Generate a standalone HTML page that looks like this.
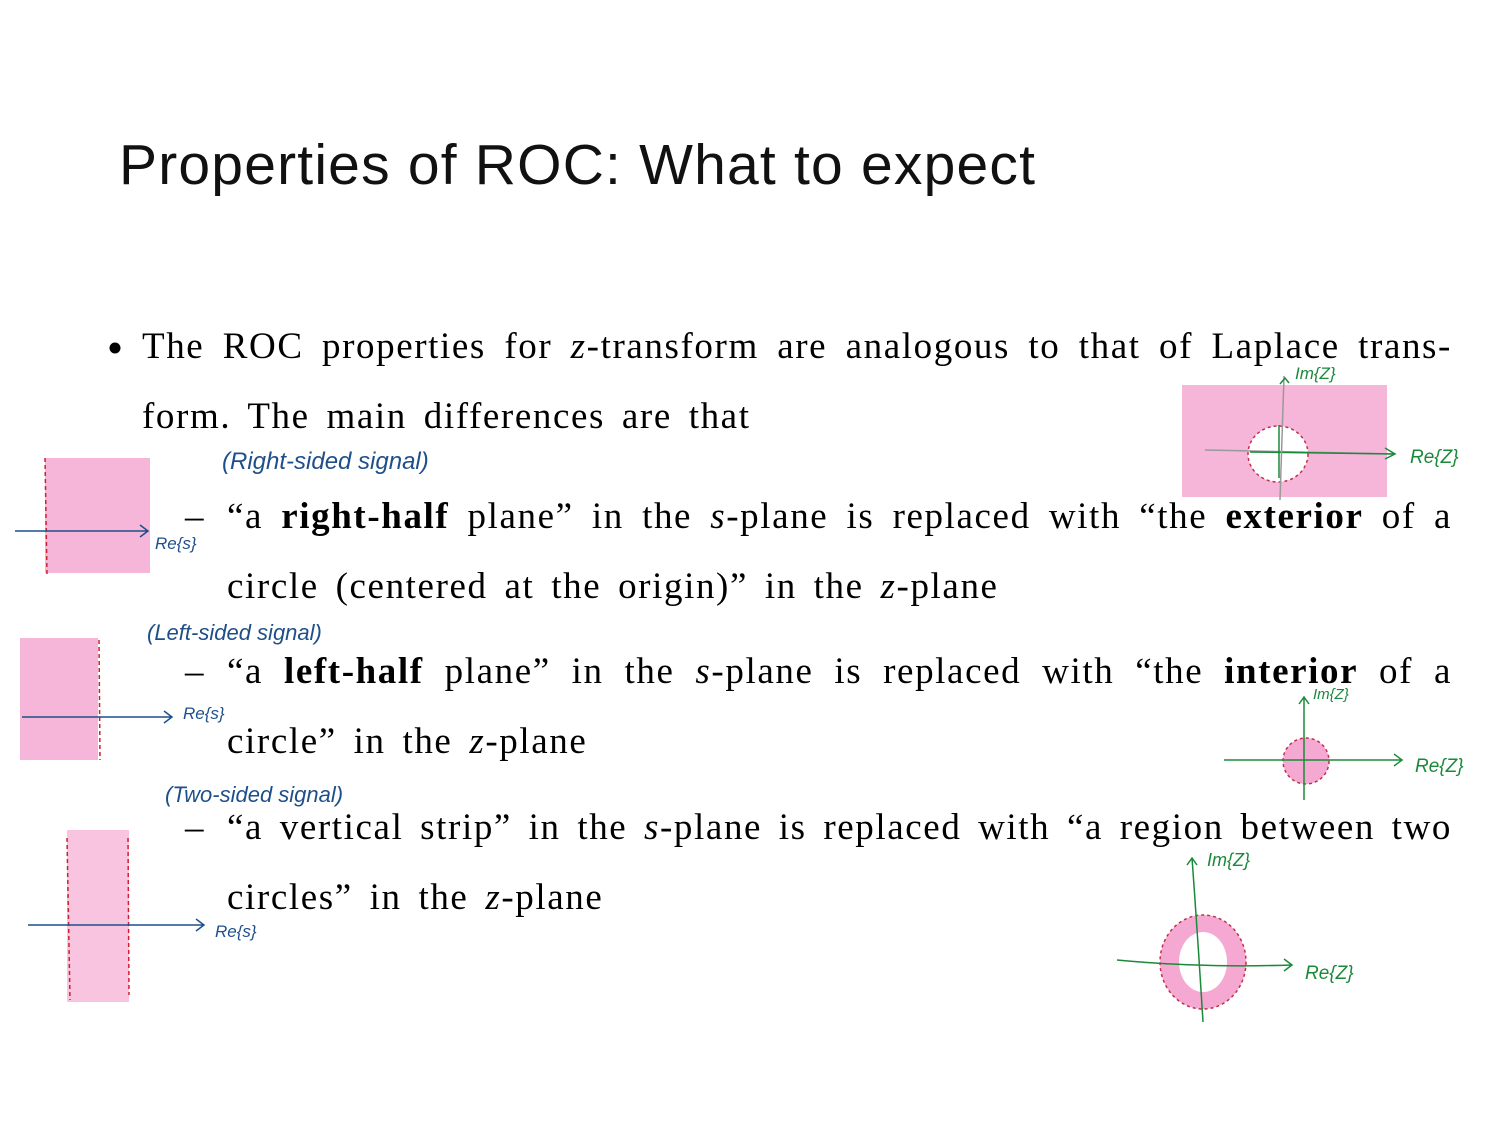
<!DOCTYPE html>
<html><head><meta charset="utf-8"><style>
body{margin:0;background:#fff;width:1500px;height:1125px;position:relative;overflow:hidden;font-family:"Liberation Serif",serif;color:#000}
.t{position:absolute;left:119px;top:132px;font-family:"Liberation Sans",sans-serif;font-size:57px;font-weight:300;letter-spacing:1.2px;color:#111}
.l{position:absolute;font-size:37px;line-height:40px;white-space:nowrap;letter-spacing:1.6px;word-spacing:6px}
.j{text-align:justify;text-align-last:justify;white-space:normal;letter-spacing:1.6px;word-spacing:0}
i{font-style:italic}
.h{position:absolute;font-family:"Liberation Sans",sans-serif;font-style:italic}
</style></head><body>
<div class="t">Properties of ROC: What to expect</div>
<svg style="position:absolute;left:0;top:0" width="1500" height="1125">
<rect x="1182" y="385" width="205" height="112" fill="#f5a9d2" opacity=".85"/>
<ellipse cx="1278" cy="454" rx="30" ry="28" fill="#fff" stroke="#c0304a" stroke-dasharray="3,3" stroke-width="1.5"/>
<line x1="1205" y1="450" x2="1395" y2="454" stroke="#999" stroke-width="1.5"/>
<line x1="1250" y1="452" x2="1395" y2="454" stroke="#1a8a3a" stroke-width="1.5"/>
<line x1="1280" y1="500" x2="1284" y2="376" stroke="#999" stroke-width="1.5"/>
<line x1="1279" y1="425" x2="1279" y2="478" stroke="#1a8a3a" stroke-width="1.5"/>
<path d="M1385 448l10 6-10 5M1280 384l5-6 4 5" fill="none" stroke="#1a8a3a" stroke-width="1.5"/>
<rect x="45" y="458" width="105" height="115" fill="#f5a9d2" opacity=".85"/>
<line x1="45" y1="458" x2="47" y2="575" stroke="#d02030" stroke-dasharray="4,3" stroke-width="1.5"/>
<path d="M15 531H148M140 525l8 6-8 6" fill="none" stroke="#1f4f8a" stroke-width="1.5"/>
<rect x="20" y="638" width="78" height="122" fill="#f5a9d2" opacity=".85"/>
<line x1="99" y1="640" x2="100" y2="760" stroke="#d02030" stroke-dasharray="4,3" stroke-width="1.5"/>
<path d="M22 717H172M164 711l8 6-8 6" fill="none" stroke="#1f4f8a" stroke-width="1.5"/>
<circle cx="1306" cy="761" r="23" fill="#f5a9d2" stroke="#c0304a" stroke-dasharray="3,3" stroke-width="1.5"/>
<path d="M1224 760H1402M1394 754l8 6-8 6M1304 800V697M1299 704l5-7 5 7" fill="none" stroke="#1a8a3a" stroke-width="1.5"/>
<rect x="67" y="830" width="62" height="172" fill="#f9c4e0"/>
<line x1="67" y1="838" x2="70" y2="1000" stroke="#d02030" stroke-dasharray="4,3" stroke-width="1.5"/>
<line x1="128" y1="838" x2="129" y2="995" stroke="#d02030" stroke-dasharray="4,3" stroke-width="1.5"/>
<path d="M28 925H204M196 919l8 6-8 6" fill="none" stroke="#1f4f8a" stroke-width="1.5"/>
<ellipse cx="1203" cy="962" rx="43" ry="47" fill="#f5a9d2" stroke="#c0304a" stroke-dasharray="3,3" stroke-width="1.5"/>
<ellipse cx="1203" cy="962" rx="24" ry="30" fill="#fff"/>
<path d="M1117 960Q1200 968 1292 965M1284 959l8 6-8 6M1203 1022Q1198 940 1192 858M1187 865l5-7 5 7" fill="none" stroke="#1a8a3a" stroke-width="1.5"/>
<circle cx="115" cy="348" r="5.5" fill="#000"/>
</svg>
<div class="h" style="left:1295px;top:364px;color:#1a8a3a;font-size:17px">Im{Z}</div>
<div class="h" style="left:1410px;top:447px;color:#1a8a3a;font-size:19px">Re{Z}</div>
<div class="h" style="left:222px;top:448px;color:#1f4f8a;font-size:24px">(Right-sided signal)</div>
<div class="h" style="left:155px;top:534px;color:#1f4f8a;font-size:17px">Re{s}</div>
<div class="h" style="left:147px;top:620px;color:#1f4f8a;font-size:22px">(Left-sided signal)</div>
<div class="h" style="left:183px;top:704px;color:#1f4f8a;font-size:17px">Re{s}</div>
<div class="h" style="left:1313px;top:686px;color:#1a8a3a;font-size:15px">Im{Z}</div>
<div class="h" style="left:1415px;top:756px;color:#1a8a3a;font-size:19px">Re{Z}</div>
<div class="h" style="left:165px;top:782px;color:#1f4f8a;font-size:22px">(Two-sided signal)</div>
<div class="h" style="left:215px;top:922px;color:#1f4f8a;font-size:17px">Re{s}</div>
<div class="h" style="left:1207px;top:850px;color:#1a8a3a;font-size:18px">Im{Z}</div>
<div class="h" style="left:1305px;top:963px;color:#1a8a3a;font-size:19px">Re{Z}</div>

<div class="l j" style="left:142px;top:327px;width:1310px">The ROC properties for <i>z</i>-transform are analogous to that of Laplace trans-</div>
<div class="l" style="left:142px;top:397px">form. The main differences are that</div>
<div class="l" style="left:185px;top:497px">–</div>
<div class="l j" style="left:227px;top:497px;width:1225px">“a <b>right-half</b> plane” in the <i>s</i>-plane is replaced with “the <b>exterior</b> of a</div>
<div class="l" style="left:227px;top:567px">circle (centered at the origin)” in the <i>z</i>-plane</div>
<div class="l" style="left:185px;top:652px">–</div>
<div class="l j" style="left:227px;top:652px;width:1225px">“a <b>left-half</b> plane” in the <i>s</i>-plane is replaced with “the <b>interior</b> of a</div>
<div class="l" style="left:227px;top:722px">circle” in the <i>z</i>-plane</div>
<div class="l" style="left:185px;top:808px">–</div>
<div class="l j" style="left:227px;top:808px;width:1225px">“a vertical strip” in the <i>s</i>-plane is replaced with “a region between two</div>
<div class="l" style="left:227px;top:878px">circles” in the <i>z</i>-plane</div>
</body></html>
